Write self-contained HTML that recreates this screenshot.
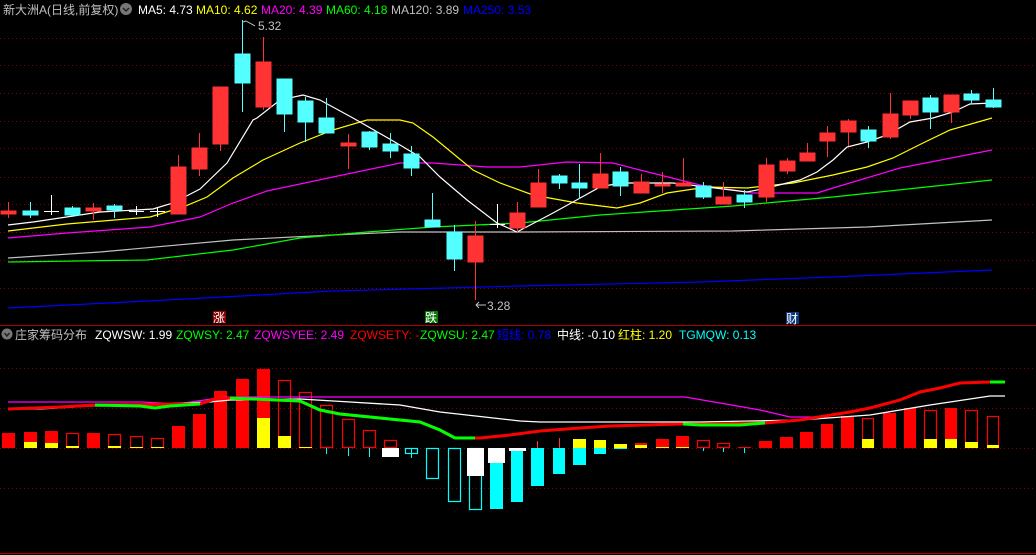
<!DOCTYPE html>
<html><head><meta charset="utf-8"><style>
html,body{margin:0;padding:0;background:#000;width:1036px;height:555px;overflow:hidden}
svg{display:block}
text{font-family:"Liberation Sans","Noto Sans CJK SC",sans-serif;font-size:12px}
</style></head><body>
<svg width="1036" height="555" viewBox="0 0 1036 555" xmlns="http://www.w3.org/2000/svg">
<rect width="1036" height="555" fill="#000"/>
<g stroke="#8a0000" stroke-width="1" stroke-dasharray="1,3">
<line x1="0" y1="38.5" x2="1036" y2="38.5"/><line x1="0" y1="65.5" x2="1036" y2="65.5"/><line x1="0" y1="93.5" x2="1036" y2="93.5"/><line x1="0" y1="121.5" x2="1036" y2="121.5"/><line x1="0" y1="148.5" x2="1036" y2="148.5"/><line x1="0" y1="177.5" x2="1036" y2="177.5"/><line x1="0" y1="204.5" x2="1036" y2="204.5"/><line x1="0" y1="232.5" x2="1036" y2="232.5"/><line x1="0" y1="260.5" x2="1036" y2="260.5"/><line x1="0" y1="288.5" x2="1036" y2="288.5"/>
<line x1="0" y1="368.5" x2="1036" y2="368.5"/><line x1="0" y1="408.5" x2="1036" y2="408.5"/><line x1="0" y1="448.5" x2="1036" y2="448.5"/><line x1="0" y1="488.5" x2="1036" y2="488.5"/>
</g>
<line x1="0" y1="325.5" x2="1036" y2="325.5" stroke="#b00000"/>
<line x1="0" y1="553.5" x2="1036" y2="553.5" stroke="#b00000"/>

<g fill="none" stroke-width="1.2">
<polyline stroke="#0000ff" points="8,308 167,300 333,291 520,286 700,282 833,277 992,270"/>
<polyline stroke="#c0c0c0" points="8,258 100,252 233,240 333,235 400,232 520,232 733,231 867,227 992,220"/>
<polyline stroke="#00ff00" points="8,262 147,260 233,250 300,238 367,232 433,227 520,223 600,215 733,206 833,197 992,180"/>
<polyline stroke="#ff00ff" points="8,238 67,233 150,227 200,217 233,203 267,191 333,177 400,163 433,163 487,167 520,167 567,162 613,163 640,170 700,185 753,193 817,193 833,188 900,168 992,150"/>
<polyline stroke="#ffff00" points="8,231 67,224 150,217 183,207 207,197 233,178 263,160 300,143 333,130 367,120 400,120 413,123 433,137 473,170 500,183 533,195 577,203 617,208 640,203 667,193 707,187 747,188 793,183 833,175 867,167 893,158 923,143 950,130 992,118"/>
<polyline stroke="#ffffff" points="8,225 33,222 100,212 153,209 173,203 200,189 227,163 253,120 257,118 280,100 303,95 320,100 353,118 400,145 420,157 440,177 467,200 497,223 517,232 553,213 573,202 600,187 620,183 673,183 707,187 747,192 767,188 787,183 800,180 817,172 833,160 847,147 867,142 887,135 910,122 933,118 953,112 970,104 992,103"/>
</g>

<g stroke-width="1">
<g stroke="#ff3333" fill="#ff3333">
<line x1="8.5" y1="202" x2="8.5" y2="218"/><rect x="1" y="211" width="15" height="3"/>
<line x1="93.5" y1="203" x2="93.5" y2="220"/><rect x="86" y="208" width="15" height="3"/>
<line x1="178.5" y1="155" x2="178.5" y2="214"/><rect x="171" y="167" width="15" height="47"/>
<line x1="199.5" y1="133" x2="199.5" y2="176"/><rect x="192" y="148" width="15" height="21"/>
<line x1="220.5" y1="87" x2="220.5" y2="151"/><rect x="213" y="87" width="15" height="57"/>
<line x1="263.5" y1="37" x2="263.5" y2="110"/><rect x="256" y="62" width="15" height="45"/>
<line x1="348.5" y1="134" x2="348.5" y2="169"/><rect x="341" y="143" width="15" height="3"/>
<line x1="475.5" y1="221" x2="475.5" y2="300"/><rect x="468" y="236" width="15" height="26"/>
<line x1="517.5" y1="202" x2="517.5" y2="232"/><rect x="510" y="213" width="15" height="15"/>
<line x1="538.5" y1="169" x2="538.5" y2="207"/><rect x="531" y="183" width="15" height="24"/>
<line x1="600.5" y1="153" x2="600.5" y2="188"/><rect x="593" y="174" width="15" height="14"/>
<line x1="641.5" y1="174" x2="641.5" y2="193"/><rect x="634" y="182" width="15" height="11"/>
<line x1="662.5" y1="172" x2="662.5" y2="193"/><rect x="655" y="184" width="15" height="2"/>
<line x1="683.5" y1="158" x2="683.5" y2="186"/><rect x="676" y="183" width="15" height="3"/>
<line x1="723.5" y1="182" x2="723.5" y2="204"/><rect x="716" y="197" width="15" height="7"/>
<line x1="766.5" y1="158" x2="766.5" y2="202"/><rect x="759" y="165" width="15" height="32"/>
<line x1="787.5" y1="158" x2="787.5" y2="174"/><rect x="780" y="161" width="15" height="10"/>
<line x1="807.5" y1="143" x2="807.5" y2="161"/><rect x="800" y="153" width="15" height="8"/>
<line x1="827.5" y1="126" x2="827.5" y2="157"/><rect x="820" y="133" width="15" height="8"/>
<line x1="848.5" y1="119" x2="848.5" y2="146"/><rect x="841" y="121" width="15" height="11"/>
<line x1="890.5" y1="93" x2="890.5" y2="139"/><rect x="883" y="114" width="15" height="23"/>
<line x1="910.5" y1="101" x2="910.5" y2="119"/><rect x="903" y="101" width="15" height="14"/>
<line x1="951.5" y1="95" x2="951.5" y2="123"/><rect x="944" y="95" width="15" height="17"/>
</g>
<g stroke="#54ffff" fill="#54ffff">
<line x1="30.5" y1="202" x2="30.5" y2="218"/><rect x="23" y="211" width="15" height="4"/>
<line x1="72.5" y1="206" x2="72.5" y2="217"/><rect x="65" y="208" width="15" height="7"/>
<line x1="114.5" y1="204" x2="114.5" y2="218"/><rect x="107" y="206" width="15" height="4"/>
<line x1="242.5" y1="20" x2="242.5" y2="112"/><rect x="235" y="54" width="15" height="29"/>
<line x1="284.5" y1="79" x2="284.5" y2="132"/><rect x="277" y="79" width="15" height="35"/>
<line x1="305.5" y1="97" x2="305.5" y2="142"/><rect x="298" y="101" width="15" height="21"/>
<line x1="326.5" y1="98" x2="326.5" y2="133"/><rect x="319" y="118" width="15" height="15"/>
<line x1="369.5" y1="131" x2="369.5" y2="150"/><rect x="362" y="132" width="15" height="15"/>
<line x1="390.5" y1="133" x2="390.5" y2="158"/><rect x="383" y="144" width="15" height="7"/>
<line x1="411.5" y1="146" x2="411.5" y2="176"/><rect x="404" y="154" width="15" height="14"/>
<line x1="432.5" y1="193" x2="432.5" y2="227"/><rect x="425" y="220" width="15" height="7"/>
<line x1="454.5" y1="225" x2="454.5" y2="271"/><rect x="447" y="232" width="15" height="27"/>
<line x1="559.5" y1="174" x2="559.5" y2="189"/><rect x="552" y="176" width="15" height="7"/>
<line x1="579.5" y1="164" x2="579.5" y2="199"/><rect x="572" y="183" width="15" height="5"/>
<line x1="620.5" y1="167" x2="620.5" y2="196"/><rect x="613" y="172" width="15" height="14"/>
<line x1="703.5" y1="182" x2="703.5" y2="199"/><rect x="696" y="186" width="15" height="11"/>
<line x1="744.5" y1="190" x2="744.5" y2="208"/><rect x="737" y="195" width="15" height="7"/>
<line x1="868.5" y1="126" x2="868.5" y2="148"/><rect x="861" y="130" width="15" height="11"/>
<line x1="930.5" y1="95" x2="930.5" y2="129"/><rect x="923" y="98" width="15" height="14"/>
<line x1="971.5" y1="90" x2="971.5" y2="104"/><rect x="964" y="94" width="15" height="6"/>
<line x1="993.5" y1="88" x2="993.5" y2="108"/><rect x="986" y="100" width="15" height="7"/>
</g>
<g stroke="#ffffff">
<line x1="51.5" y1="195" x2="51.5" y2="215"/><line x1="44" y1="211.5" x2="59" y2="211.5"/>
<line x1="136.5" y1="206" x2="136.5" y2="215"/><line x1="129" y1="211.5" x2="144" y2="211.5"/>
<line x1="157.5" y1="207" x2="157.5" y2="217"/><line x1="150" y1="211.5" x2="165" y2="211.5"/>
<line x1="497.5" y1="204" x2="497.5" y2="228"/><line x1="490" y1="224.5" x2="505" y2="224.5"/>
</g>
</g>
<g stroke="#c0c0c0" fill="none"><polyline points="255,26 246,21 243,22"/><polyline points="486,305 476,305"/><polyline points="479,302 476,305 479,308"/></g>
<text x="258" y="30" fill="#c0c0c0">5.32</text>
<text x="487" y="310" fill="#c0c0c0">3.28</text>
<rect x="213" y="311" width="13" height="12" fill="#8b0000"/><text x="213" y="322" fill="#fff" font-size="12">涨</text>
<rect x="425" y="311" width="13" height="12" fill="#0a7a0a"/><text x="425" y="322" fill="#fff">跌</text>
<rect x="786" y="312" width="13" height="12" fill="#0a3a7a"/><text x="786" y="323" fill="#fff">财</text>

<text x="3" y="14" fill="#c0c0c0">新大洲A(日线,前复权)</text>
<circle cx="126" cy="9" r="6" fill="#777"/><path d="M123 8 L126 11 L129 8" stroke="#222" stroke-width="1.5" fill="none"/>
<text x="138" y="14" fill="#fff">MA5: 4.73</text>
<text x="196" y="14" fill="#ffff00">MA10: 4.62</text>
<text x="261" y="14" fill="#ff00ff">MA20: 4.39</text>
<text x="326" y="14" fill="#00ff00">MA60: 4.18</text>
<text x="391" y="14" fill="#c0c0c0">MA120: 3.89</text>
<text x="463" y="14" fill="#0000ff">MA250: 3.53</text>

<circle cx="7" cy="334" r="5.5" fill="#777"/><path d="M4.5 333 L7 336 L9.5 333" stroke="#222" stroke-width="1.5" fill="none"/>
<text x="15" y="339" fill="#c0c0c0">庄家筹码分布</text>
<text x="95" y="339" fill="#fff">ZQWSW: 1.99</text>
<text x="176" y="339" fill="#00ff00">ZQWSY: 2.47</text>
<text x="254" y="339" fill="#ff00ff">ZQWSYEE: 2.49</text>
<text x="350" y="339" fill="#ff0000">ZQWSETY: -</text>
<text x="420" y="339" fill="#00ff00">ZQWSU: 2.47</text>
<text x="497" y="339" fill="#0000ff">短线: 0.78</text>
<text x="557" y="339" fill="#fff">中线: -0.10</text>
<text x="618" y="339" fill="#ffff00">红柱: 1.20</text>
<text x="679" y="339" fill="#00ffff">TGMQW: 0.13</text>

<g fill="#ff0000">
<rect x="2" y="433" width="13" height="15"/><rect x="24" y="432" width="13" height="16"/><rect x="45" y="431" width="13" height="17"/>
<rect x="87" y="433" width="13" height="15"/><rect x="172" y="426" width="13" height="22"/><rect x="193" y="414" width="13" height="34"/>
<rect x="214" y="391" width="13" height="57"/><rect x="236" y="379" width="13" height="69"/><rect x="257" y="369" width="13" height="79"/>
<rect x="635" y="443" width="12" height="5"/><rect x="656" y="439" width="13" height="9"/><rect x="676" y="436" width="13" height="12"/>
<rect x="738" y="447" width="13" height="1"/>
<rect x="759" y="441" width="13" height="7"/><rect x="780" y="437" width="13" height="11"/><rect x="800" y="432" width="13" height="16"/>
<rect x="821" y="424" width="12" height="24"/><rect x="841" y="416" width="13" height="32"/><rect x="883" y="413" width="13" height="35"/>
<rect x="904" y="408" width="12" height="40"/><rect x="945" y="408" width="12" height="40"/>
</g>
<g fill="none" stroke="#ff0000" stroke-width="1.2">
<rect x="66.5" y="433.5" width="12" height="14"/><rect x="108.5" y="434.5" width="12" height="13"/><rect x="130.5" y="436.5" width="12" height="11"/>
<rect x="151.5" y="438.5" width="12" height="9"/><rect x="278.5" y="380.5" width="12" height="67"/><rect x="299.5" y="392.5" width="12" height="55"/>
<rect x="320.5" y="405.5" width="12" height="42"/><rect x="342.5" y="419.5" width="12" height="28"/><rect x="363.5" y="430.5" width="12" height="17"/>
<rect x="384.5" y="440.5" width="12" height="7"/>
<rect x="697.5" y="440.5" width="12" height="7"/><rect x="717.5" y="443.5" width="12" height="4"/>
<rect x="862.5" y="418.5" width="11" height="29"/><rect x="924.5" y="410.5" width="12" height="37"/><rect x="965.5" y="410.5" width="12" height="37"/><rect x="987.5" y="416.5" width="11" height="31"/>
</g>
<g stroke="#ff3333"><line x1="537.5" y1="441" x2="537.5" y2="448"/><line x1="559.5" y1="438" x2="559.5" y2="448"/></g>
<g fill="#ffff00">
<rect x="24" y="442" width="13" height="6"/><rect x="45" y="443" width="13" height="5"/><rect x="66" y="446" width="13" height="2"/>
<rect x="108" y="446" width="13" height="2"/><rect x="130" y="447" width="13" height="1"/><rect x="151" y="447" width="13" height="1"/>
<rect x="257" y="418" width="13" height="30"/><rect x="278" y="436" width="13" height="12"/><rect x="299" y="447" width="13" height="1"/>
<rect x="573" y="439" width="13" height="9"/><rect x="594" y="440" width="12" height="8"/><rect x="614" y="444" width="13" height="4"/>
<rect x="635" y="445" width="12" height="3"/><rect x="656" y="447" width="13" height="1"/><rect x="676" y="447" width="13" height="1"/>
<rect x="862" y="439" width="12" height="9"/><rect x="924" y="439" width="13" height="9"/><rect x="945" y="439" width="12" height="9"/>
<rect x="965" y="442" width="13" height="6"/><rect x="987" y="445" width="12" height="3"/>
</g>
<g stroke="#00ffff">
<line x1="326.5" y1="448" x2="326.5" y2="454"/><line x1="348.5" y1="448" x2="348.5" y2="456"/><line x1="369.5" y1="448" x2="369.5" y2="457"/>
<line x1="411.5" y1="448" x2="411.5" y2="458"/><line x1="703.5" y1="448" x2="703.5" y2="451"/><line x1="723.5" y1="448" x2="723.5" y2="452"/><line x1="744.5" y1="448" x2="744.5" y2="453"/>
</g>
<g fill="none" stroke="#00ffff" stroke-width="1.2">
<rect x="405.5" y="448.5" width="12" height="5"/><rect x="426.5" y="448.5" width="12" height="30"/><rect x="448.5" y="448.5" width="12" height="53"/><rect x="469.5" y="448.5" width="12" height="61"/>
</g>
<g fill="#00ffff">
<rect x="490" y="448" width="13" height="61"/><rect x="511" y="448" width="12" height="54"/><rect x="531" y="448" width="13" height="38"/>
<rect x="553" y="448" width="12" height="26"/><rect x="573" y="448" width="13" height="17"/><rect x="594" y="448" width="12" height="6"/><rect x="614" y="448" width="13" height="1"/>
</g>
<g fill="#ffffff">
<rect x="382" y="448" width="17" height="9"/><rect x="467" y="448" width="17" height="28"/><rect x="488" y="448" width="17" height="15"/><rect x="509" y="448" width="17" height="3"/>
</g>

<polyline fill="none" stroke="#ff00ff" stroke-width="1.3" points="8,402 142,402 177,404 225,397 685,397 720,403 760,410 790,417 820,417"/>
<polyline fill="none" stroke="#ffffff" stroke-width="1.3" points="25,409 40,409 90,406 103,406 210,402 230,400 300,399 350,402 400,405 440,412 520,421 540,422 700,422 800,420 870,415 900,410 930,405 990,396 1005,396"/>
<polyline fill="none" stroke="#ff0000" stroke-width="3" points="8,409 60,407 95,405 200,404 215,399 230,398 300,401 320,410 340,414 380,418 420,422 440,430 455,438 480,438 510,435 540,431 580,428 610,426 680,424 700,424 765,423 800,420 850,412 870,408 900,400 920,392 940,388 960,383 990,382 1005,382"/>
<g fill="none" stroke="#00ff00" stroke-width="3">
<polyline points="95,405 140,406 155,408 170,406 200,404"/>
<polyline points="230,398 300,401 320,410 340,414 380,418 420,422 440,430 455,438 475,438"/>
<polyline points="683,424 700,425 740,425 765,423"/>
<polyline points="990,382 1005,382"/>
</g>
</svg>
</body></html>
